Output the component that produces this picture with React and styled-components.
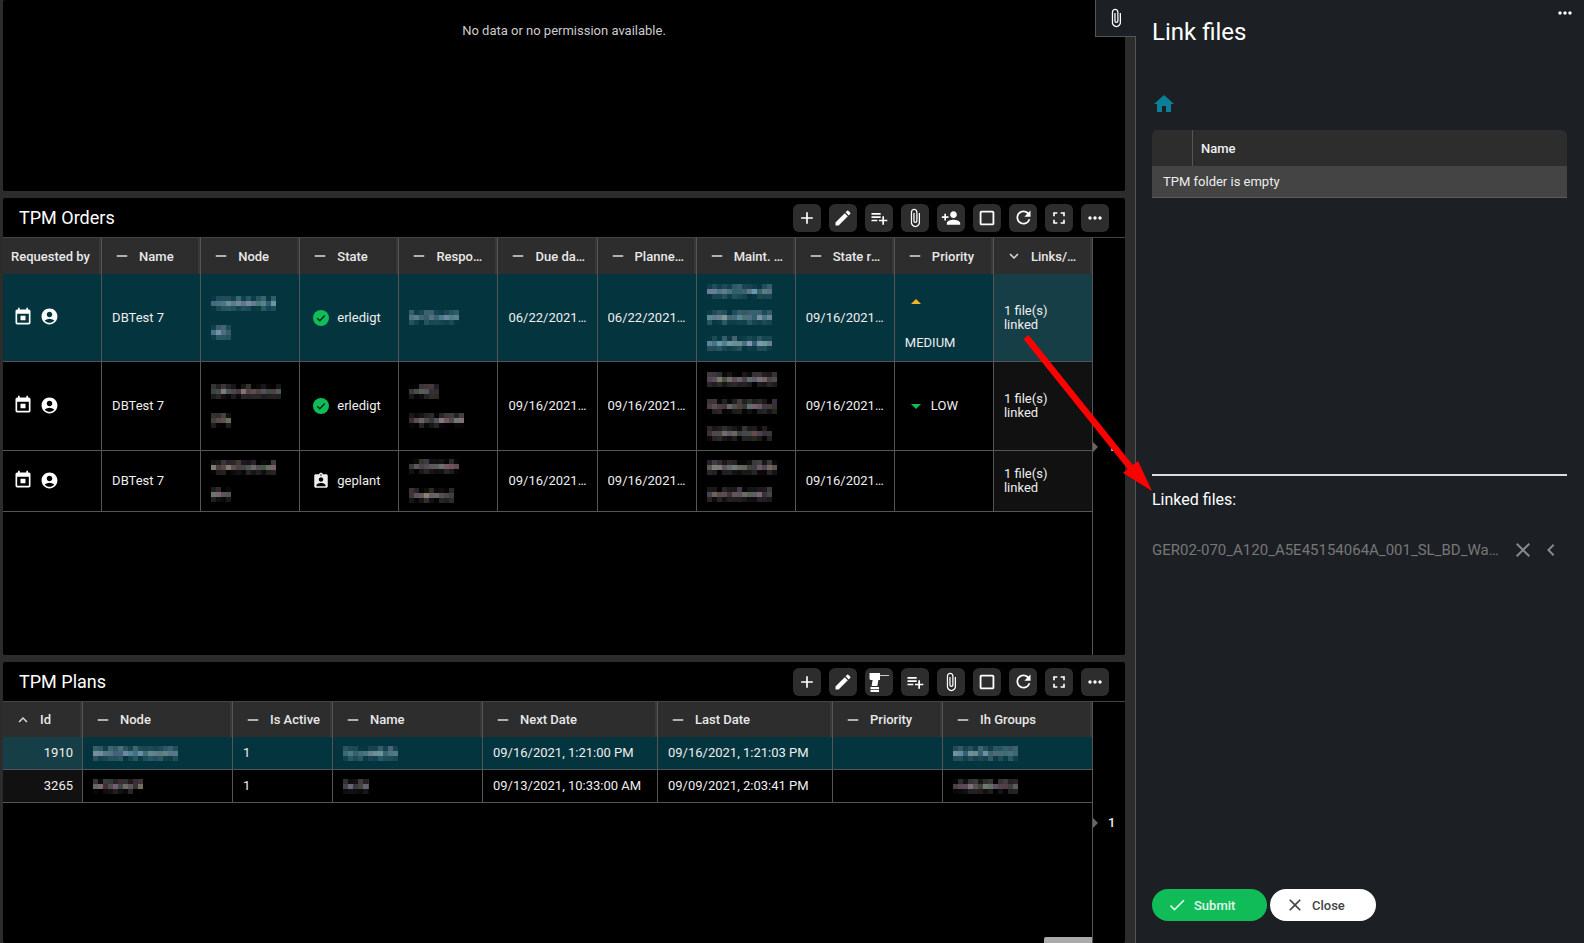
import React from 'react'
import styled, { createGlobalStyle } from 'styled-components'
import {
  MdAdd,
  MdEdit,
  MdPlaylistAdd,
  MdAttachFile,
  MdPersonAdd,
  MdCropSquare,
  MdRefresh,
  MdFullscreen,
  MdMoreHoriz,
  MdHome,
  MdClose,
  MdCheck,
  MdChevronLeft,
  MdExpandMore,
  MdExpandLess,
  MdRemove,
  MdAccountCircle,
  MdAssignmentInd,
} from 'react-icons/md'

const GlobalStyle = createGlobalStyle`
  html, body {
    margin: 0;
    padding: 0;
    height: 943px;
    overflow: hidden;
    background: #2c2c2c;
    font-family: Roboto, "Liberation Sans", sans-serif;
    color: #eee;
  }
`

const Page = styled.div`
  position: relative;
  display: flex;
  width: 1584px;
  height: 943px;
  overflow: hidden;
`

const Main = styled.main`
  width: 1135px;
  flex: none;
  box-sizing: border-box;
  padding: 0 10px 0 3px;
  display: flex;
  flex-direction: column;
  gap: 7px;
  background: #2c2c2c;
`

const Panel = styled.section`
  height: ${(p) => p.$height}px;
  flex: none;
  display: flex;
  flex-direction: column;
  background: #000;
  border-radius: 2px;
  overflow: hidden;
`

const EmptyNote = styled.div`
  padding-top: 23px;
  text-align: center;
  font-size: 13px;
  line-height: 16px;
  color: #ccc;
`

const TitleBar = styled.header`
  height: 39px;
  flex: none;
  box-sizing: content-box;
  display: flex;
  align-items: center;
  justify-content: space-between;
  padding: 0 16px;
  border-bottom: 1px solid #444;
`

const PanelTitle = styled.h2`
  margin: 0;
  font-size: 18px;
  font-weight: 400;
  color: #fff;
`

const Toolbar = styled.div`
  display: flex;
  gap: 8px;
`

const ToolButton = styled.button`
  width: 28px;
  height: 28px;
  padding: 0;
  border: none;
  border-radius: 6px;
  background: #2d2d2d;
  color: #fff;
  display: flex;
  align-items: center;
  justify-content: center;
`

const PanelBody = styled.div`
  flex: 1;
  min-height: 0;
  display: flex;
`

const TableArea = styled.div`
  position: relative;
  width: 1090px;
  flex: none;
  box-sizing: border-box;
  border-right: 1px solid #555;
`

const ScrollThumb = styled.div`
  position: absolute;
  right: 0;
  bottom: 0;
  width: 48px;
  height: 6px;
  background: #aaa;
  border-radius: 2px 0 0 0;
`

const Row = styled.div`
  display: grid;
  grid-template-columns: ${(p) => p.$cols};
  height: ${(p) => p.$height}px;
  background: ${(p) => (p.$selected ? '#04353f' : 'transparent')};
`

const HeadCell = styled.div`
  display: flex;
  align-items: center;
  min-width: 0;
  box-sizing: border-box;
  padding-left: ${(p) => (p.$plain ? 8 : 8)}px;
  background: #2d2d2d;
  border-right: 1px solid #555;
  box-shadow: inset -2px 0 0 #383838;
  font-size: 13px;
  font-weight: 500;
  color: #e8e8e8;

  &:last-child {
    border-right: none;
  }
`

const HeadMark = styled.span`
  width: 26px;
  flex: none;
  display: flex;
  align-items: center;
  color: #ddd;
`

const HeadLabel = styled.span`
  min-width: 0;
  padding-right: 10px;
  white-space: nowrap;
  overflow: hidden;
  text-overflow: ellipsis;
`

const Cell = styled.div`
  display: flex;
  align-items: center;
  min-width: 0;
  box-sizing: border-box;
  padding: 0 ${(p) => (p.$right ? 9 : 10)}px;
  justify-content: ${(p) => (p.$right ? 'flex-end' : 'flex-start')};
  border-right: 1px solid #555;
  border-bottom: 1px solid #555;
  font-size: 13px;
  line-height: 14px;
  color: #eee;
  background: ${(p) => (p.$tone === 'sel' ? '#163e47' : p.$tone === 'dark' ? '#111' : 'transparent')};

  &:last-child {
    border-right: none;
  }
`

const Clipped = styled.span`
  display: block;
  min-width: 0;
  white-space: nowrap;
  overflow: hidden;
  text-overflow: ellipsis;
`

const WrapText = styled.span`
  display: block;
  max-width: 60px;
`

const IconPair = styled.div`
  display: flex;
  align-items: center;
  gap: 7px;
  margin: -2px 0 0 0;
  color: #fff;
`

const StateBox = styled.div`
  display: flex;
  align-items: center;
  gap: 8px;
  margin-left: 3px;
`

const Stack = styled.div`
  display: flex;
  flex-direction: column;
  gap: ${(p) => p.$gap || 13}px;
`

const PriorityTall = styled.div`
  height: 100%;
  display: flex;
  flex-direction: column;
  justify-content: space-between;
  padding: 25px 0 11px;
  box-sizing: border-box;
`

const PriorityLine = styled.div`
  display: flex;
  align-items: center;
  gap: 10px;
  padding-left: ${(p) => p.$indent || 0}px;
`

const Triangle = styled.span`
  width: 0;
  height: 0;
  display: block;
  border-left: 5.5px solid transparent;
  border-right: 5.5px solid transparent;
  border-bottom: ${(p) => (p.$up ? `5px solid ${p.$color}` : 'none')};
  border-top: ${(p) => (p.$up ? 'none' : `5px solid ${p.$color}`)};
`

const Pager = styled.div`
  flex: 1;
  display: flex;
  align-items: center;
  gap: 10px;
  font-size: 13px;
  font-weight: 500;
  color: #eee;
`

const PagerMark = styled.span`
  width: 0;
  height: 0;
  display: block;
  border-top: 5px solid transparent;
  border-bottom: 5px solid transparent;
  border-left: 5px solid #666;
`

const MosaicSvg = styled.svg`
  display: block;
  flex: none;
`

const Side = styled.aside`
  flex: 1;
  min-width: 0;
  box-sizing: border-box;
  padding: 16px 17px 22px 16px;
  display: flex;
  flex-direction: column;
  background: #1c1f24;
  border-left: 1px solid #555;
`

const SideTab = styled.div`
  position: absolute;
  top: 0;
  left: 1095px;
  width: 41px;
  height: 37px;
  box-sizing: border-box;
  display: flex;
  align-items: center;
  justify-content: center;
  background: #1c1f24;
  border-left: 1px solid #555;
  border-bottom: 1px solid #555;
  color: #fff;
`

const SideMenu = styled.div`
  position: absolute;
  top: 3px;
  right: 9px;
  color: #fff;
  display: flex;
`

const SideTitle = styled.h1`
  margin: 0;
  font-size: 24px;
  line-height: 32px;
  font-weight: 400;
  color: #fff;
`

const HomeLink = styled.div`
  margin-top: 44px;
  height: 24px;
  display: flex;
  color: #0a7f97;
`

const FileArea = styled.div`
  margin-top: 14px;
  height: 344px;
  flex: none;
`

const FileHead = styled.div`
  height: 36px;
  display: flex;
  background: #2d2d2d;
  border-radius: 6px 6px 0 0;
  font-size: 13px;
  font-weight: 500;
  color: #f0f0f0;
`

const FileHeadSpacer = styled.div`
  width: 40px;
  flex: none;
  border-right: 1px solid #555;
`

const FileHeadName = styled.div`
  padding-left: 8px;
  display: flex;
  align-items: center;
`

const FileEmpty = styled.div`
  height: 32px;
  box-sizing: border-box;
  padding-left: 11px;
  display: flex;
  align-items: center;
  background: #444;
  border-bottom: 1px solid #5c5c5c;
  font-size: 13px;
  color: #eee;
`

const Divider = styled.div`
  height: 2px;
  flex: none;
  background: #ddd;
`

const LinkedLabel = styled.div`
  margin-top: 14px;
  font-size: 16px;
  line-height: 20px;
  color: #fff;
`

const LinkedRow = styled.div`
  margin-top: 28px;
  height: 24px;
  display: flex;
  align-items: center;
  color: #888;
`

const LinkedName = styled.span`
  width: 350px;
  flex: none;
  margin-right: 9px;
  font-size: 15px;
  color: #777;
  white-space: nowrap;
  overflow: hidden;
  text-overflow: ellipsis;
`

const Footer = styled.div`
  margin-top: auto;
  display: flex;
  gap: 3px;
`

const PillButton = styled.button`
  width: ${(p) => p.$width}px;
  height: 32px;
  padding: 0 0 0 15px;
  border: none;
  border-radius: 16px;
  display: flex;
  align-items: center;
  gap: 7px;
  font-family: inherit;
  font-size: 13px;
  font-weight: 500;
  background: ${(p) => p.$bg};
  color: ${(p) => p.$fg};
`

const ArrowOverlay = styled.svg`
  position: absolute;
  top: 0;
  left: 0;
  pointer-events: none;
`

const mix = (a, b, t) => a.map((v, i) => Math.round(v + (b[i] - v) * t))

function Mosaic({ w, h = 15, seed = 1, sel }) {
  const cols = Math.ceil(w / 5)
  const rows = Math.ceil(h / 5)
  let s = seed * 7919 + w * 31
  const rnd = () => {
    s = (s * 16807) % 2147483647
    return (s % 1000) / 1000
  }
  const from = sel ? [4, 53, 63] : [0, 0, 0]
  const rects = []
  for (let y = 0; y < rows; y++) {
    for (let x = 0; x < cols; x++) {
      const mid = rows === 3 ? y === 1 : y > 0 && y < rows - 1
      const strength = mid ? 0.35 + rnd() * 0.5 : rnd() * (y === 0 ? 0.45 : 0.3)
      const to = sel
        ? [120 + rnd() * 40, 155 + rnd() * 30, 170 + rnd() * 30]
        : [130 + rnd() * 40, 120 + rnd() * 35, 125 + rnd() * 35]
      const c = mix(from, to, strength)
      rects.push(<rect key={`${x}-${y}`} x={x * 5} y={y * 5} width="5" height="5" fill={`rgb(${c.join(',')})`} />)
    }
  }
  return (
    <MosaicSvg width={w} height={h} shapeRendering="crispEdges">
      {rects}
    </MosaicSvg>
  )
}

// calendar with the little square in the middle
const CalendarIcon = () => (
  <svg width="20" height="20" viewBox="0 0 24 24" fill="currentColor">
    <path d="M19 3h-1V1h-2v2H8V1H6v2H5c-1.11 0-1.99.9-1.99 2L3 19a2 2 0 0 0 2 2h14c1.1 0 2-.9 2-2V5c0-1.1-.9-2-2-2zm0 16H5V8h14v11zM9 10.5h6v5.5H9z" />
  </svg>
)

const CheckBadge = () => (
  <svg width="16" height="16" viewBox="0 0 16 16">
    <circle cx="8" cy="8" r="8" fill="#10bc58" />
    <path d="M4.2 8.2l2.6 2.6 5-5.2" fill="none" stroke="#06261a" strokeWidth="1.4" />
  </svg>
)

const DrillIcon = () => (
  <svg width="28" height="28" viewBox="0 0 28 28" fill="#fff">
    <path d="M4.5 5h10.5v2h9v.8h-9V12h-1.6l-1 6H6.6l1-6H6a1.5 1.5 0 0 1-1.5-1.5z" />
    <path d="M5.5 19h8.5v2H5.5zM5.5 21.8h8.5V24H5.5z" />
  </svg>
)

const Clip = () => <MdAttachFile size={20} />
const toolIcons = {
  add: <MdAdd size={20} />,
  edit: <MdEdit size={20} />,
  list: <MdPlaylistAdd size={20} />,
  clip: <Clip />,
  person: <MdPersonAdd size={20} />,
  square: <MdCropSquare size={22} />,
  refresh: <MdRefresh size={21} />,
  full: <MdFullscreen size={20} />,
  more: <MdMoreHoriz size={20} />,
  drill: <DrillIcon />,
}

const ordersTools = ['add', 'edit', 'list', 'clip', 'person', 'square', 'refresh', 'full', 'more']
const plansTools = ['add', 'edit', 'drill', 'list', 'clip', 'square', 'refresh', 'full', 'more']

const ordersCols = 'repeat(10, 99.1px) 1fr'
const plansCols = '80px 150px 100px 150px 175px 175px 110px 1fr'

const ordersHead = [
  'Name',
  'Node',
  'State',
  'Responsible',
  'Due date',
  'Planned date',
  'Maint. Groups',
  'State reason',
  'Priority',
]

const plansHead = ['Node', 'Is Active', 'Name', 'Next Date', 'Last Date', 'Priority', 'Ih Groups']

const orders = [
  {
    height: 88,
    selected: true,
    state: 'erledigt',
    due: '06/22/2021, 12:00:00 AM',
    planned: '06/22/2021, 12:00:00 AM',
    reason: '09/16/2021, 1:21:00 PM',
    node: [65, 20],
    nodeGap: 14,
    resp: [50],
    maint: [65, 65, 65],
    maintGap: 11,
  },
  {
    height: 89,
    state: 'erledigt',
    due: '09/16/2021, 1:21:00 PM',
    planned: '09/16/2021, 1:21:00 PM',
    reason: '09/16/2021, 1:21:00 PM',
    node: [70, 20],
    nodeGap: 14,
    resp: [30, 55],
    maint: [70, 70, 65],
    maintGap: 12,
    indent: true,
  },
  {
    height: 61,
    state: 'geplant',
    due: '09/16/2021, 1:21:00 PM',
    planned: '09/16/2021, 1:21:00 PM',
    reason: '09/16/2021, 1:21:00 PM',
    node: [65, 20],
    nodeGap: 12,
    resp: [50, 45],
    maint: [70, 65],
    maintGap: 12,
    indent: true,
  },
]

const plans = [
  {
    selected: true,
    id: '1910',
    node: 85,
    name: 55,
    group: 65,
    next: '09/16/2021, 1:21:00 PM',
    last: '09/16/2021, 1:21:03 PM',
  },
  {
    id: '3265',
    node: 50,
    name: 26,
    group: 65,
    next: '09/13/2021, 10:33:00 AM',
    last: '09/09/2021, 2:03:41 PM',
  },
]

function Tools({ names }) {
  return (
    <Toolbar>
      {names.map((n, i) => (
        <ToolButton key={i}>{toolIcons[n]}</ToolButton>
      ))}
    </Toolbar>
  )
}

function MosaicStack({ items, gap, sel, seed }) {
  return (
    <Stack $gap={gap}>
      {items.map((w, i) => (
        <Mosaic key={i} w={w} sel={sel} seed={seed + i * 3} />
      ))}
    </Stack>
  )
}

function Priority({ index }) {
  if (index === 0) {
    return (
      <PriorityTall>
        <PriorityLine $indent={6}>
          <Triangle $up $color="#f5b323" />
        </PriorityLine>
        <span>MEDIUM</span>
      </PriorityTall>
    )
  }
  if (index === 1) {
    return (
      <PriorityLine $indent={6}>
        <Triangle $color="#10bc58" />
        LOW
      </PriorityLine>
    )
  }
  return null
}

function OrdersTable() {
  return (
    <TableArea>
      <Row $cols={ordersCols} $height={36}>
        <HeadCell>Requested by</HeadCell>
        {ordersHead.map((h) => (
          <HeadCell key={h} $mark>
            <HeadMark style={{ paddingLeft: 3 }}>
              <MdRemove size={18} />
            </HeadMark>
            <HeadLabel>{h}</HeadLabel>
          </HeadCell>
        ))}
        <HeadCell>
          <HeadMark style={{ paddingLeft: 3 }}>
            <MdExpandMore size={18} />
          </HeadMark>
          <HeadLabel>Links/Attachments</HeadLabel>
        </HeadCell>
      </Row>
      {orders.map((o, i) => (
        <Row key={i} $cols={ordersCols} $height={o.height} $selected={o.selected}>
          <Cell>
            <IconPair>
              <CalendarIcon />
              <MdAccountCircle size={19} />
            </IconPair>
          </Cell>
          <Cell>DBTest 7</Cell>
          <Cell>
            <MosaicStack items={o.node} gap={o.nodeGap} sel={o.selected} seed={i + 11} />
          </Cell>
          <Cell>
            <StateBox>
              {o.state === 'geplant' ? <MdAssignmentInd size={18} style={{ margin: '0 -1px' }} /> : <CheckBadge />}
              {o.state}
            </StateBox>
          </Cell>
          <Cell>
            <MosaicStack items={o.resp} gap={14} sel={o.selected} seed={i + 23} />
          </Cell>
          <Cell>
            <Clipped>{o.due}</Clipped>
          </Cell>
          <Cell>
            <Clipped>{o.planned}</Clipped>
          </Cell>
          <Cell>
            <MosaicStack items={o.maint} gap={o.maintGap} sel={o.selected} seed={i + 37} />
          </Cell>
          <Cell>
            <Clipped>{o.reason}</Clipped>
          </Cell>
          <Cell>
            <Priority index={i} />
          </Cell>
          <Cell $tone={o.selected ? 'sel' : 'dark'}>
            <WrapText>1 file(s) linked</WrapText>
          </Cell>
        </Row>
      ))}
    </TableArea>
  )
}

function PlansTable() {
  return (
    <TableArea>
      <Row $cols={plansCols} $height={35}>
        <HeadCell>
          <HeadMark style={{ paddingLeft: 3 }}>
            <MdExpandLess size={18} />
          </HeadMark>
          <HeadLabel>Id</HeadLabel>
        </HeadCell>
        {plansHead.map((h) => (
          <HeadCell key={h} $mark>
            <HeadMark style={{ paddingLeft: 3 }}>
              <MdRemove size={18} />
            </HeadMark>
            <HeadLabel>{h}</HeadLabel>
          </HeadCell>
        ))}
      </Row>
      {plans.map((p, i) => (
        <Row key={p.id} $cols={plansCols} $height={33} $selected={p.selected}>
          <Cell $right $tone={p.selected ? 'sel' : 'dark'}>
            {p.id}
          </Cell>
          <Cell>
            <Mosaic w={p.node} sel={p.selected} seed={i + 51} />
          </Cell>
          <Cell>1</Cell>
          <Cell>
            <Mosaic w={p.name} sel={p.selected} seed={i + 61} />
          </Cell>
          <Cell>
            <Clipped>{p.next}</Clipped>
          </Cell>
          <Cell>
            <Clipped>{p.last}</Clipped>
          </Cell>
          <Cell />
          <Cell>
            <Mosaic w={p.group} sel={p.selected} seed={i + 71} />
          </Cell>
        </Row>
      ))}
      <ScrollThumb />
    </TableArea>
  )
}

export default function App() {
  return (
    <Page>
      <GlobalStyle />
      <Main>
        <Panel $height={191}>
          <EmptyNote>No data or no permission available.</EmptyNote>
        </Panel>
        <Panel $height={457}>
          <TitleBar>
            <PanelTitle>TPM Orders</PanelTitle>
            <Tools names={ordersTools} />
          </TitleBar>
          <PanelBody>
            <OrdersTable />
            <Pager>
              <PagerMark />1
            </Pager>
          </PanelBody>
        </Panel>
        <Panel $height={281}>
          <TitleBar>
            <PanelTitle>TPM Plans</PanelTitle>
            <Tools names={plansTools} />
          </TitleBar>
          <PanelBody>
            <PlansTable />
            <Pager>
              <PagerMark />1
            </Pager>
          </PanelBody>
        </Panel>
      </Main>
      <Side>
        <SideTitle>Link files</SideTitle>
        <HomeLink>
          <MdHome size={24} />
        </HomeLink>
        <FileArea>
          <FileHead>
            <FileHeadSpacer />
            <FileHeadName>Name</FileHeadName>
          </FileHead>
          <FileEmpty>TPM folder is empty</FileEmpty>
        </FileArea>
        <Divider />
        <LinkedLabel>Linked files:</LinkedLabel>
        <LinkedRow>
          <LinkedName>GER02-070_A120_A5E45154064A_001_SL_BD_Wartungsplan.pdf</LinkedName>
          <MdClose size={24} />
          <MdChevronLeft size={24} style={{ marginLeft: 4 }} />
        </LinkedRow>
        <Footer>
          <PillButton $width={115} $bg="#10bc58" $fg="#e3f7eb">
            <MdCheck size={20} />
            Submit
          </PillButton>
          <PillButton $width={106} $bg="#fff" $fg="#444">
            <MdClose size={20} />
            Close
          </PillButton>
        </Footer>
      </Side>
      <SideTab>
        <Clip />
      </SideTab>
      <SideMenu>
        <MdMoreHoriz size={20} />
      </SideMenu>
      <ArrowOverlay width="1584" height="943" viewBox="0 0 1584 943">
        <path d="M1026 337L1131 468" stroke="#f00" strokeWidth="6.5" fill="none" />
        <path d="M1152 491L1123 473L1138 461z" fill="#f00" />
      </ArrowOverlay>
    </Page>
  )
}
